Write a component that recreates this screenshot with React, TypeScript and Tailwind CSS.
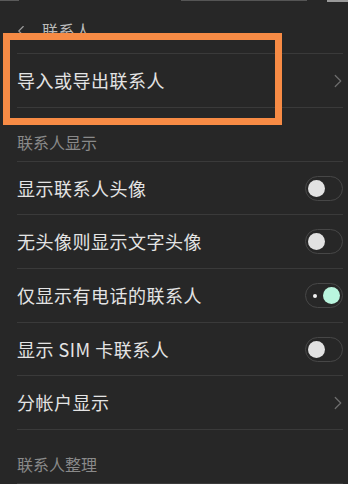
import { ChevronLeft, ChevronRight } from "lucide-react";

type Row =
    | { kind: "section"; label: string; h: string }
    | { kind: "link"; label: string; h: string }
    | { kind: "toggle"; label: string; h: string; on: boolean };

const rows: Row[] = [
    { kind: "link", label: "导入或导出联系人", h: "h-[54px]" },
    { kind: "section", label: "联系人显示", h: "h-[54px]" },
    { kind: "toggle", label: "显示联系人头像", h: "h-[53px]", on: false },
    { kind: "toggle", label: "无头像则显示文字头像", h: "h-[54px]", on: false },
    { kind: "toggle", label: "仅显示有电话的联系人", h: "h-[54px]", on: true },
    { kind: "toggle", label: "显示 SIM 卡联系人", h: "h-[53px]", on: false },
    { kind: "link", label: "分帐户显示", h: "h-[54px]" },
    { kind: "section", label: "联系人整理", h: "h-[54px]" },
];

const Toggle = ({ on }: { on: boolean }) => (
    <div className="w-[38px] h-[25px] rounded-full border border-[#474747] flex items-center px-[2px]">
        {on ? (
            <>
                <span className="w-[4px] h-[4px] rounded-full bg-[#f2f2f2] ml-[5px]" />
                <span className="ml-auto w-[17px] h-[17px] rounded-full bg-[#b9f5de]" />
            </>
        ) : (
            <span className="w-[17px] h-[17px] rounded-full bg-[#e2e2e2]" />
        )}
    </div>
);

const App = () => {
    return (
        <div
            className="relative w-[348px] h-[484px] overflow-hidden bg-[#272727] text-[#e4e4e4]"
            style={{ fontFamily: '"Noto Sans CJK SC", "Noto Sans", sans-serif' }}
        >
            {/* status bar remnants */}
            <div className="absolute top-0 left-0 right-0 h-[2px] flex items-start">
                <span className="w-[20px] h-[1px] bg-[#5a5a5a]" />
                <span className="ml-[162px] w-[130px] h-[1px] bg-[#555]" />
                <span className="ml-[20px] w-[22px] h-[2px] bg-[#9a9a9a]" />
            </div>

            <div className="pl-[17px] pr-[5px]">
                {/* header */}
                <div className="h-[54px] border-b border-[#3a3a3a] flex items-start pt-[19px] gap-[12px]">
                    <ChevronLeft size={18} strokeWidth={1.5} className="text-[#9c9c9c] -ml-[5px] mt-[3px]" />
                    <span className="text-[16px] leading-[22px] text-[#bcbcbc] tracking-[0.5px]">联系人</span>
                </div>

                {rows.map((r, i) => (
                    <div
                        key={i}
                        className={`${r.h} border-b border-[#3a3a3a] flex ${
                            r.kind === "section" ? "items-end pb-[8px]" : "items-center"
                        }`}
                    >
                        {r.kind === "section" ? (
                            <span className="text-[16px] leading-[22px] text-[#8a8a8a]">{r.label}</span>
                        ) : (
                            <>
                                <span className="text-[18px] tracking-[0.5px]">{r.label}</span>
                                <div className="ml-auto">
                                    {r.kind === "toggle" ? (
                                        <Toggle on={r.on} />
                                    ) : (
                                        <ChevronRight size={22} strokeWidth={1.3} className="text-[#6e6e6e] -mr-[6px]" />
                                    )}
                                </div>
                            </>
                        )}
                    </div>
                ))}
            </div>

            {/* annotation highlight */}
            <div className="absolute left-[3px] top-[33px] w-[279px] h-[92px] border-[7px] border-[#f78b45]" />
        </div>
    );
};

export default App;
